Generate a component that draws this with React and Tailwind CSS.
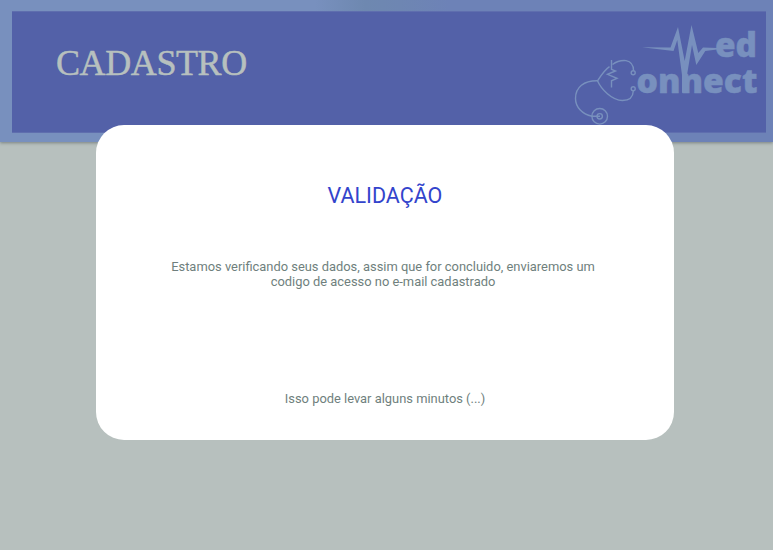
function Logo() {
  return (
    <svg
      width="190"
      height="108"
      viewBox="573 20 190 108"
      fill="none"
      stroke="#7890be"
      strokeWidth="1.4"
      role="img"
      aria-label="Med Connect"
    >
      <path d="M600 116.3H592C582 114 575.5 107 575.5 98.5C575.5 87 584 80.6 597.5 80.8C601 75.5 605 69.5 609.5 66.7" />
      <path d="M612.5 64.5C617 61 622 60.3 626 60.6C630.5 61.5 633.5 65 633.5 70.5" />
      <path d="M597.5 80.8C601 89 612 100.5 622.5 100.5C629 100.5 633 98 633.3 91" />
      <path d="M611.5 60V69.3L615.5 71L607.5 74.3L617 78.3L611.5 80.8V87.5" />
      <circle cx="633.2" cy="72.7" r="2" />
      <circle cx="633.2" cy="88.7" r="2" />
      <circle cx="599.7" cy="116.3" r="7.8" />
      <circle cx="599.7" cy="116.3" r="2.7" />
      <g fill="#7890be" stroke="none">
        <path d="M642 47.3L670.5 47.5L678 27L684.7 61L691.5 25L698.3 53L703 47.5L717 48V49.5L705.3 51L696.3 65L692 45L687 75V92.8H682V75L677.3 40L673.5 51Z" />
        <g
          fontFamily="'Open Sans', sans-serif"
          fontWeight="800"
          stroke="#7890be"
          strokeWidth="0.5"
        >
          <text x="715" y="57" fontSize="34" textLength="42" lengthAdjust="spacingAndGlyphs">ed</text>
          <text x="636.5" y="92.8" fontSize="34" textLength="121" lengthAdjust="spacingAndGlyphs">onnect</text>
        </g>
      </g>
    </svg>
  );
}

export default function App() {
  return (
    <div className="h-[550px] w-[773px] overflow-hidden bg-[#b7c0be] font-['Roboto',sans-serif]">
      <header className="h-[142px] bg-[linear-gradient(90deg,#7890be_0,#7890be_315px,#6e88b0_365px,#6e86b2_400px,#6d82b7_450px,#6d82b7_100%)] pt-[11px] pr-[7px] pl-3 shadow-[0_1px_3px_rgba(80,90,90,0.6)]">
        <div className="flex h-[122px] items-start justify-between border-y border-[#5f6eae] bg-[#5361a8] pr-[3px] pl-11">
          <h1 className="pt-[30px] font-['Liberation_Serif',serif] text-[36px] leading-[42px] tracking-[-0.4px] text-[#b7c0be] [-webkit-text-stroke:0.5px_#b7c0be]">
            CADASTRO
          </h1>
          <div className="pt-2">
            <Logo />
          </div>
        </div>
      </header>
      <main className="relative -mt-[17px] mr-[99px] ml-24 flex h-[315px] flex-col items-center rounded-[28px] bg-white text-center text-[12.9px] leading-[15px] text-[#6f7f7d]">
        <h2 className="mt-[58px] text-[21.5px] leading-[26px] text-[#3344cc]">VALIDAÇÃO</h2>
        <p className="mt-[50px] mr-1 w-[440px]">
          Estamos verificando seus dados, assim que for concluido, enviaremos um
          <br />
          codigo de acesso no e-mail cadastrado
        </p>
        <p className="mt-[102px]">Isso pode levar alguns minutos (...)</p>
      </main>
    </div>
  );
}
